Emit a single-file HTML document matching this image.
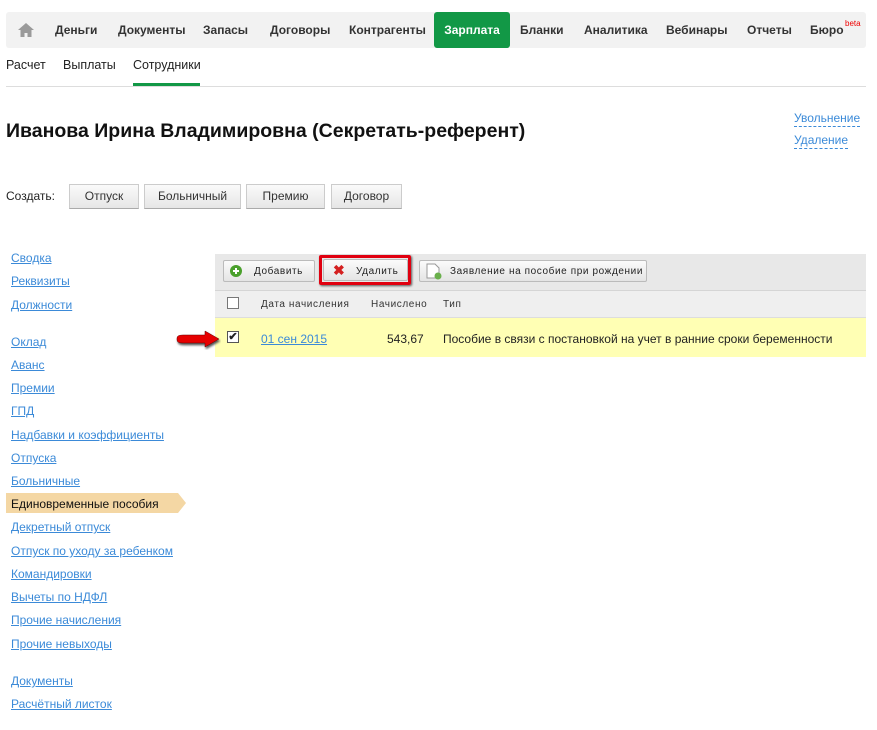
<!DOCTYPE html>
<html><head><meta charset="utf-8"><style>
*{margin:0;padding:0;box-sizing:border-box}
body{width:877px;height:730px;background:#fff;font-family:"Liberation Sans",Arial,sans-serif;position:relative;overflow:hidden;color:#222}
.a{position:absolute;white-space:nowrap}
.nav{left:6px;top:12px;width:860px;height:36px;background:#f2f2f2;border-radius:3px}
.nav span{position:absolute;top:11px;font-size:12px;font-weight:bold;color:#333}
.green{left:434px;top:12px;width:76px;height:36px;background:#129846;border-radius:3px;color:#fff;font-weight:bold;font-size:12px;text-align:center;line-height:37px}
.sub{top:58px;font-size:12.5px;color:#222}
.lnk{color:#3b8ad8;text-decoration:underline;font-size:12px;left:11px}
.btn{top:184px;height:25px;background:linear-gradient(#fafafa,#e6e6e6);border:1px solid #ccc;border-bottom-color:#aaa;font-size:12px;color:#333;text-align:center;line-height:23px}
.tb{top:260px;height:22px;background:linear-gradient(#fbfbfb,#e4e4e4);border:1px solid #bbb;border-radius:2px;font-size:10px;letter-spacing:0.6px;color:#222;line-height:21px}
.th{top:299px;font-size:10px;letter-spacing:0.6px;color:#333}
</style></head><body>
<div class="a nav">
<svg style="position:absolute;left:11px;top:10px" width="18" height="16" viewBox="0 0 18 16"><path d="M9 1L1 8h2.5v7h4v-4h3v4h4V8H17z" fill="#9a9a9a"/></svg>
<span style="left:49px">Деньги</span><span style="left:112px">Документы</span><span style="left:197px">Запасы</span><span style="left:264px">Договоры</span><span style="left:343px">Контрагенты</span>
<span style="left:514px">Бланки</span><span style="left:578px">Аналитика</span><span style="left:660px">Вебинары</span><span style="left:741px">Отчеты</span><span style="left:804px">Бюро</span>
<span style="left:839px;top:7px;font-size:8px;color:#e00;font-weight:normal">beta</span>
</div>
<div class="a green">Зарплата</div>
<div class="a sub" style="left:6px">Расчет</div>
<div class="a sub" style="left:63px">Выплаты</div>
<div class="a sub" style="left:133px">Сотрудники</div>
<div class="a" style="left:133px;top:83px;width:67px;height:3px;background:#129846"></div>
<div class="a" style="left:6px;top:86px;width:860px;height:1px;background:#ddd"></div>
<div class="a" style="left:6px;top:120px;font-size:19.5px;font-weight:bold;color:#111">Иванова Ирина Владимировна (Секретать-референт)</div>
<div class="a" style="left:794px;top:111px;font-size:12px;color:#3b8ad8;border-bottom:1px dashed #3b8ad8;line-height:15px">Увольнение</div>
<div class="a" style="left:794px;top:133px;font-size:12px;color:#3b8ad8;border-bottom:1px dashed #3b8ad8;line-height:15px">Удаление</div>
<div class="a" style="left:6px;top:189px;font-size:12px">Создать:</div>
<div class="a btn" style="left:69px;width:70px">Отпуск</div>
<div class="a btn" style="left:144px;width:97px">Больничный</div>
<div class="a btn" style="left:246px;width:79px">Премию</div>
<div class="a btn" style="left:331px;width:71px">Договор</div>
<div class="a lnk" style="top:251px">Сводка</div>
<div class="a lnk" style="top:274px">Реквизиты</div>
<div class="a lnk" style="top:298px">Должности</div>
<div class="a lnk" style="top:335px">Оклад</div>
<div class="a lnk" style="top:358px">Аванс</div>
<div class="a lnk" style="top:381px">Премии</div>
<div class="a lnk" style="top:404px">ГПД</div>
<div class="a lnk" style="top:428px">Надбавки и коэффициенты</div>
<div class="a lnk" style="top:451px">Отпуска</div>
<div class="a lnk" style="top:474px">Больничные</div>
<svg class="a" style="left:6px;top:493px" width="180" height="20"><path d="M0 0H172L180 10L172 20H0Z" fill="#f4d7a4"/></svg>
<div class="a" style="left:11px;top:497px;font-size:12px;color:#111">Единовременные пособия</div>
<div class="a lnk" style="top:520px">Декретный отпуск</div>
<div class="a lnk" style="top:544px">Отпуск по уходу за ребенком</div>
<div class="a lnk" style="top:567px">Командировки</div>
<div class="a lnk" style="top:590px">Вычеты по НДФЛ</div>
<div class="a lnk" style="top:613px">Прочие начисления</div>
<div class="a lnk" style="top:637px">Прочие невыходы</div>
<div class="a lnk" style="top:674px">Документы</div>
<div class="a lnk" style="top:697px">Расчётный листок</div>
<div class="a" style="left:215px;top:254px;width:651px;height:36px;background:#e8e8e8"></div>
<div class="a" style="left:215px;top:290px;width:651px;height:28px;background:#efefef;border-top:1px solid #d5d5d5;border-bottom:1px solid #ddd"></div>
<div class="a" style="left:215px;top:318px;width:651px;height:39px;background:#ffffb4"></div>
<div class="a tb" style="left:223px;width:92px"><svg style="position:absolute;left:6px;top:4px" width="12" height="12"><circle cx="6" cy="6" r="6" fill="#4aa02c"/><path d="M6 3v6M3 6h6" stroke="#fff" stroke-width="2"/></svg><span style="position:absolute;left:30px">Добавить</span></div>
<div class="a" style="left:319px;top:255px;width:92px;height:30px;border:3px solid #e00010;border-radius:2px;box-shadow:1px 1px 2px #555"></div>
<div class="a tb" style="left:323px;width:85px;top:259px"><span style="position:absolute;left:9px;top:0px;color:#d42020;font-size:14px;font-weight:bold">✖</span><span style="position:absolute;left:32px;top:1px">Удалить</span></div>
<div class="a tb" style="left:419px;width:228px"><svg style="position:absolute;left:6px;top:2px" width="16" height="17"><path d="M1 1h8l4 4v10H1z" fill="#fff" stroke="#999"/><circle cx="12" cy="13" r="3.5" fill="#6ab04c"/></svg><span style="position:absolute;left:30px">Заявление на пособие при рождении</span></div>
<div class="a" style="left:227px;top:297px;width:12px;height:12px;border:1px solid #777;background:#fff"></div>
<div class="a th" style="left:261px">Дата начисления</div>
<div class="a th" style="left:371px">Начислено</div>
<div class="a th" style="left:443px">Тип</div>
<div class="a" style="left:227px;top:331px;width:12px;height:12px;border:1px solid #555;background:#fff;font-size:11px;line-height:10px;text-align:center;font-weight:bold">✔</div>
<svg class="a" style="left:175px;top:330px" width="46" height="20"><path d="M2 8Q2 5 8 5H30V1L44 9L30 17V13H8Q2 13 2 10Z" fill="#e60000" stroke="#600" stroke-width="0.5" style="filter:drop-shadow(1px 2px 1px #555)"/></svg>
<div class="a" style="left:261px;top:332px;font-size:12px;color:#3b8ad8;text-decoration:underline">01 сен 2015</div>
<div class="a" style="left:387px;top:332px;font-size:12px">543,67</div>
<div class="a" style="left:443px;top:332px;font-size:12px">Пособие в связи с постановкой на учет в ранние сроки беременности</div>
</body></html>
